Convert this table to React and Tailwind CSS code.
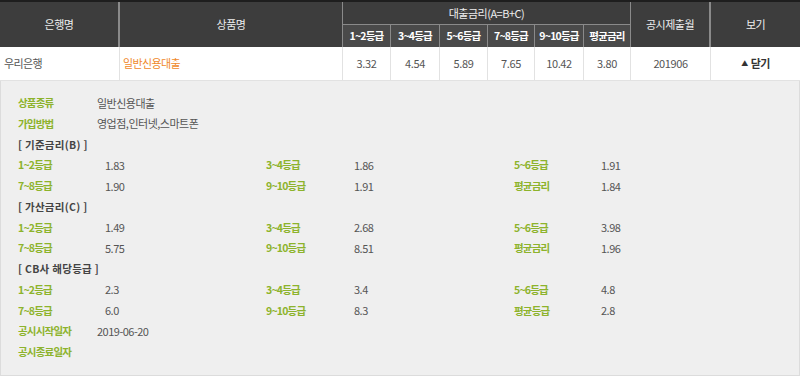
import React from "react";

const F = { fontFamily: '"Noto Sans CJK KR", "Noto Sans", sans-serif' };

const cols = "grid-cols-[120px_223px_48px_49px_48px_47px_49px_47px_80px_89px]";

function Row({ children }) {
  return <div className="grid grid-cols-[87px_161px_88px_160px_87px_1fr] h-[20.75px] items-center">{children}</div>;
}
const L = ({ children }) => (
  <div className="text-[#8db32c] font-bold text-[10.5px] tracking-[-0.8px] whitespace-nowrap">{children}</div>
);
const V = ({ children }) => (
  <div className="text-[#555] text-[11px] tracking-[-0.5px] whitespace-nowrap">{children}</div>
);
const H = ({ children }) => (
  <div className="h-[20.75px] flex items-center text-[#444] font-bold text-[10.5px] tracking-[0.3px] whitespace-pre">{children}</div>
);

function Grade({ a, b, c, d, e, f, lastLabel }) {
  return (
    <>
      <Row>
        <L>1~2등급</L><V>{a}</V><L>3~4등급</L><V>{b}</V><L>5~6등급</L><V>{c}</V>
      </Row>
      <Row>
        <L>7~8등급</L><V>{d}</V><L>9~10등급</L><V>{e}</V><L>{lastLabel}</L><V>{f}</V>
      </Row>
    </>
  );
}

export default function App() {
  const subs = ["1~2등급", "3~4등급", "5~6등급", "7~8등급", "9~10등급", "평균금리"];
  const nums = ["3.32", "4.54", "5.89", "7.65", "10.42", "3.80"];
  return (
    <div style={F} className="w-[800px] h-[376px] bg-white overflow-hidden">
      {/* header */}
      <div className={`grid ${cols} grid-rows-[22px_23px] bg-[#3d3d3d] border-t-2 border-[#1e1e1e] text-[#eee] text-[11px] tracking-[-0.5px]`}>
        <div className="row-span-2 flex items-center justify-center border-r-2 border-[#8a8a8a]">은행명</div>
        <div className="row-span-2 flex items-center justify-center border-r border-[#8a8a8a]">상품명</div>
        <div className="col-span-6 flex items-center justify-center border-r border-[#8a8a8a]">대출금리(A=B+C)</div>
        <div className="row-span-2 flex items-center justify-center border-r-2 border-[#8a8a8a]">공시제출월</div>
        <div className="row-span-2 flex items-center justify-center">보기</div>
        {subs.map((s) => (
          <div key={s} className="flex items-center justify-center bg-[#4a4a4a] border-t border-r border-[#8a8a8a] font-bold text-[10.5px] tracking-[-0.8px] text-white">
            {s}
          </div>
        ))}
      </div>
      {/* data row */}
      <div className={`grid ${cols} h-[34px] border-b border-[#e2e2e2] text-[11px] text-[#555]`}>
        <div className="flex items-center pl-[4px] border-r border-[#e2e2e2] tracking-[-0.6px]">우리은행</div>
        <div className="flex items-center pl-[3px] border-r border-[#e2e2e2] text-[#f0892a] tracking-[-0.6px]">일반신용대출</div>
        {nums.map((n) => (
          <div key={n} className="flex items-center justify-center border-r border-[#e2e2e2] tracking-[-0.4px]">{n}</div>
        ))}
        <div className="flex items-center justify-center border-r border-[#e2e2e2] tracking-[-0.4px]">201906</div>
        <div className="flex items-center justify-center gap-[3px] text-[#333] font-bold tracking-[-0.5px]">
          <span className="text-[7px] leading-none">▲</span>
          <span>닫기</span>
        </div>
      </div>
      {/* detail */}
      <div className="h-[295px] bg-[#efefef] border-l border-r border-b border-[#dcdcdc] pl-[17px] pt-[11.5px]">
        <div className="grid grid-cols-[79px_1fr] h-[20.75px] items-center">
          <L>상품종류</L><V>일반신용대출</V>
        </div>
        <div className="grid grid-cols-[79px_1fr] h-[20.75px] items-center">
          <L>가입방법</L><V>영업점,인터넷,스마트폰</V>
        </div>
        <H>[ 기준금리(B) ]</H>
        <Grade a="1.83" b="1.86" c="1.91" d="1.90" e="1.91" f="1.84" lastLabel="평균금리" />
        <H>[ 가산금리(C) ]</H>
        <Grade a="1.49" b="2.68" c="3.98" d="5.75" e="8.51" f="1.96" lastLabel="평균금리" />
        <H>[ CB사 해당등급 ]</H>
        <Grade a="2.3" b="3.4" c="4.8" d="6.0" e="8.3" f="2.8" lastLabel="평균등급" />
        <div className="grid grid-cols-[79px_1fr] h-[20.75px] items-center">
          <L>공시시작일자</L><V>2019-06-20</V>
        </div>
        <div className="grid grid-cols-[79px_1fr] h-[20.75px] items-center">
          <L>공시종료일자</L><V></V>
        </div>
      </div>
    </div>
  );
}
